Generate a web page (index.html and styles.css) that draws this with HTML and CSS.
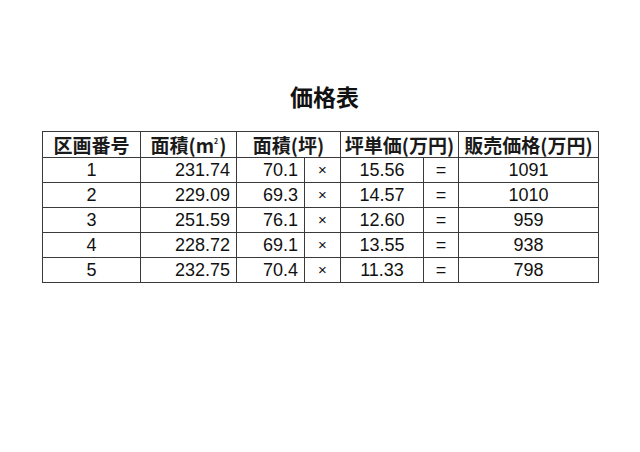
FILE: index.html
```html
<!DOCTYPE html>
<html lang="ja">
<head>
<meta charset="utf-8">
<title>価格表</title>
<link rel="stylesheet" href="styles.css">
</head>
<body>
<main class="page">
  <h1 class="title">価格表</h1>
  <table class="price-table">
    <colgroup>
      <col class="c-no">
      <col class="c-m2">
      <col class="c-tsubo">
      <col class="c-op">
      <col class="c-unit">
      <col class="c-eq">
      <col class="c-total">
    </colgroup>
    <thead>
      <tr>
        <th>区画番号</th>
        <th>面積(m<span class="sq">2</span>)</th>
        <th colspan="2">面積(坪)</th>
        <th colspan="2">坪単価(万円)</th>
        <th>販売価格(万円)</th>
      </tr>
    </thead>
    <tbody>
      <tr><td class="center">1</td><td class="right">231.74</td><td class="right">70.1</td><td class="op">×</td><td class="center">15.56</td><td class="op eq">=</td><td class="center">1091</td></tr>
      <tr><td class="center">2</td><td class="right">229.09</td><td class="right">69.3</td><td class="op">×</td><td class="center">14.57</td><td class="op eq">=</td><td class="center">1010</td></tr>
      <tr><td class="center">3</td><td class="right">251.59</td><td class="right">76.1</td><td class="op">×</td><td class="center">12.60</td><td class="op eq">=</td><td class="center">959</td></tr>
      <tr><td class="center">4</td><td class="right">228.72</td><td class="right">69.1</td><td class="op">×</td><td class="center">13.55</td><td class="op eq">=</td><td class="center">938</td></tr>
      <tr><td class="center">5</td><td class="right">232.75</td><td class="right">70.4</td><td class="op">×</td><td class="center">11.33</td><td class="op eq">=</td><td class="center">798</td></tr>
    </tbody>
  </table>
</main>
</body>
</html>
```

FILE: styles.css
```css
html, body {
  margin: 0;
  padding: 0;
  background: #ffffff;
}

body {
  width: 640px;
  height: 452px;
  overflow: hidden;
  font-family: "Liberation Sans", Arial, "Noto Sans CJK JP", sans-serif;
  color: #111111;
}

.page {
  display: flex;
  flex-direction: column;
  align-items: flex-start;
  padding: 85px 0 0 42px;
}

.title {
  align-self: stretch;
  margin: 0 0 23px 0;
  padding-left: 248px;
  font-family: "Noto Sans CJK JP", sans-serif;
  font-size: 23px;
  line-height: 23px;
  font-weight: 700;
  color: #111111;
}

.price-table {
  border-collapse: collapse;
  table-layout: fixed;
  width: 556px;
}

.price-table th,
.price-table td {
  border: 1px solid #3a3a3a;
  padding: 0;
}

.c-no { width: 98px; }
.c-m2 { width: 96px; }
.c-tsubo { width: 68px; }
.c-op { width: 36px; }
.c-unit { width: 83px; }
.c-eq { width: 35px; }
.c-total { width: 140px; }

.price-table th {
  height: 25px;
  font-family: "Noto Sans CJK JP", sans-serif;
  font-size: 19px;
  font-weight: 700;
  line-height: 25px;
  text-align: center;
  white-space: nowrap;
  color: #1a1a1a;
}

.sq {
  display: inline-block;
  font-size: 7px;
  line-height: 7px;
  vertical-align: 9px;
  margin-right: 1px;
}

.price-table td {
  height: 24px;
  font-size: 18px;
  line-height: 24px;
  color: #111111;
}

.center { text-align: center; }

.right {
  text-align: right;
  padding-right: 6px !important;
}

.op {
  text-align: center;
  font-size: 15px !important;
  color: #2a2a2a;
}

.eq {
  font-size: 18px !important;
}
```
